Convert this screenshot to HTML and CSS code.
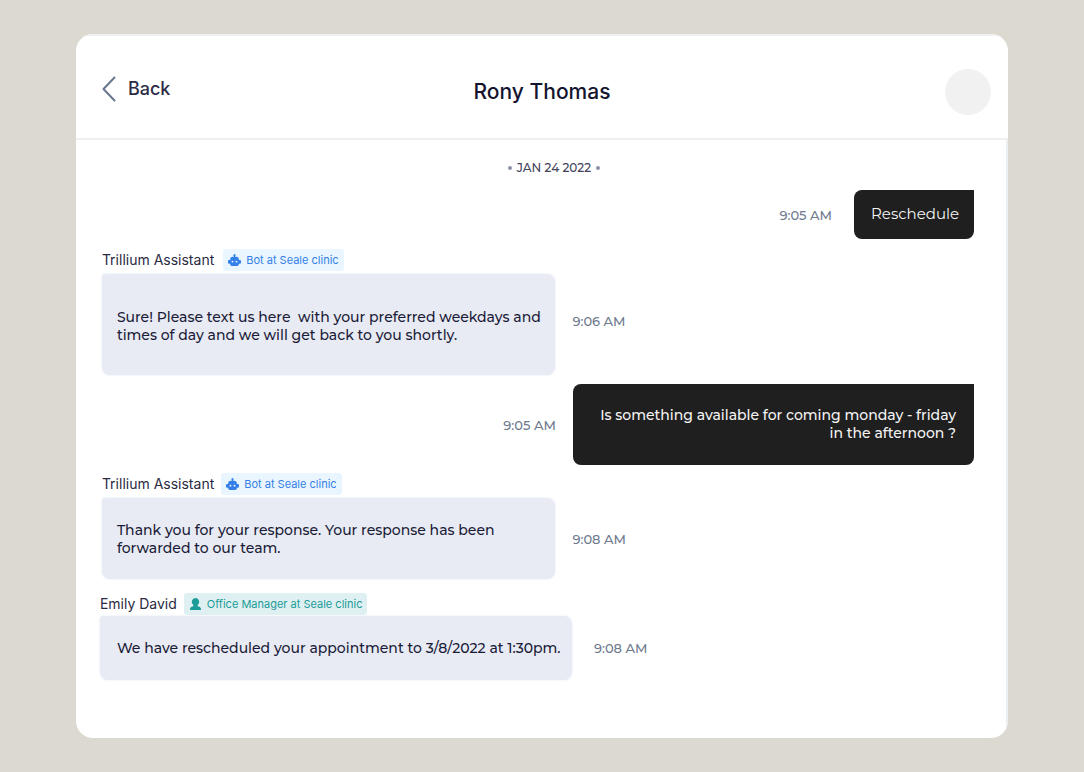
FILE: index.html
```html
<!DOCTYPE html>
<html lang="en">
<head>
<meta charset="utf-8">
<meta name="viewport" content="width=device-width, initial-scale=1">
<title>Rony Thomas</title>
<link rel="stylesheet" href="styles.css">
</head>
<body>
<svg class="defs" aria-hidden="true">
  <symbol id="robot" viewBox="0 0 24 22">
    <path fill="currentColor" fill-rule="evenodd" d="M10.8 5V3.800a2 2 0 1 1 2.400 0V5H15a5 5 0 0 1 5 5v1h2a2 2 0 0 1 2 2v3a2 2 0 0 1-2 2h-2v1a3 3 0 0 1-3 3H7a3 3 0 0 1-3-3v-1H2a2 2 0 0 1-2-2v-3a2 2 0 0 1 2-2h2v-1a5 5 0 0 1 5-5zM8.300 12.200a1.800 1.800 0 1 0 0 3.600a1.800 1.800 0 0 0 0-3.600zM15.700 12.200a1.800 1.800 0 1 0 0 3.600a1.800 1.800 0 0 0 0-3.600z"/>
  </symbol>
  <symbol id="person" viewBox="0 0 20 22">
    <path fill="currentColor" d="M10 0a7 7 0 0 1 4 12.700V15c3 .6 6 2 6 5v2H0v-2c0-3 3-4.400 6-5v-2.300A7 7 0 0 1 10 0z"/>
  </symbol>
</svg>
<main class="card">
  <header class="header">
    <button class="back" type="button">
      <svg class="chevron" viewBox="0 0 14 26" aria-hidden="true"><path d="M12.500 1.500L1.500 13l11 11.500" fill="none" stroke="currentColor" stroke-width="2" stroke-linecap="round" stroke-linejoin="round"/></svg>
      <span>Back</span>
    </button>
    <h1 class="title">Rony Thomas</h1>
    <span class="avatar"></span>
  </header>
  <section class="thread">
    <p class="date"><span class="dot"></span>JAN 24 2022<span class="dot"></span></p>
    <div class="row sent first">
      <time class="time far">9:05 AM</time>
      <p class="bubble dark short">Reschedule</p>
    </div>
    <article class="message">
      <div class="sender roomy"><span class="name">Trillium Assistant</span><span class="badge bot"><svg class="icon" aria-hidden="true"><use href="#robot"/></svg>Bot at Seale clinic</span></div>
      <div class="row">
        <p class="bubble light tall">Sure! Please text us here&nbsp; with your preferred weekdays and<br>times of day and we will get back to you shortly.</p>
        <time class="time raised">9:06 AM</time>
      </div>
    </article>
    <div class="row sent second">
      <time class="time">9:05 AM</time>
      <p class="bubble dark long">Is something available for coming monday - friday<br>in the afternoon ?</p>
    </div>
    <article class="message reply">
      <div class="sender"><span class="name">Trillium Assistant</span><span class="badge bot"><svg class="icon" aria-hidden="true"><use href="#robot"/></svg>Bot at Seale clinic</span></div>
      <div class="row">
        <p class="bubble light">Thank you for your response. Your response has been<br>forwarded to our team.</p>
        <time class="time">9:08 AM</time>
      </div>
    </article>
    <article class="message manager">
      <div class="sender close"><span class="name">Emily David</span><span class="badge office"><svg class="icon" aria-hidden="true"><use href="#person"/></svg>Office Manager at Seale clinic</span></div>
      <div class="row">
        <p class="bubble light single">We have rescheduled your appointment to 3/8/2022 at 1:30pm.</p>
        <time class="time far">9:08 AM</time>
      </div>
    </article>
  </section>
</main>
</body>
</html>
```

FILE: styles.css
```css
* { box-sizing: border-box; }
body {
  margin: 0;
  min-height: 100vh;
  padding: 34px 7%;
  display: flex;
  background: #dcd9d1;
  color: #1b1b38;
  font-family: Montserrat, Inter, sans-serif;
  font-size: 14px;
  font-weight: 500;
  line-height: 18px;
}
p, h1 { margin: 0; }
.defs { position: absolute; width: 0; height: 0; }
.card {
  flex: 1;
  display: flex;
  flex-direction: column;
  background: #fff;
  border-radius: 17px;
  overflow: hidden;
}
.header {
  display: grid;
  grid-template-columns: 1fr auto 1fr;
  align-items: center;
  padding: 33px 17px 23px;
  border-top: 2px solid #f0f0f0;
  border-bottom: 2px solid #f0f0f0;
}
.back {
  justify-self: start;
  display: flex;
  align-items: center;
  gap: 12px;
  padding: 0 0 6px 9px;
  border: 0;
  background: none;
  color: #2b2b45;
  font: 500 18px/24px Inter, sans-serif;
  cursor: pointer;
}
.chevron { width: 14px; height: 26px; color: #68778d; }
.title { font: 500 21px/28px Inter, sans-serif; color: #14142f; }
.avatar { justify-self: end; width: 46px; height: 46px; border-radius: 50%; background: #f1f1f1; }
.thread {
  flex: 1;
  padding: 20px 32px 56px 26px;
  border-right: 2px solid #eaeff4;
}
.date {
  display: flex;
  justify-content: center;
  align-items: center;
  gap: 5px;
  padding-left: 32px;
  color: #45455e;
  font-size: 12px;
  line-height: 16px;
}
.dot { width: 4px; height: 4px; border-radius: 50%; background: #8c93a6; }
.row { display: flex; align-items: center; gap: 17px; }
.sent { justify-content: flex-end; }
.first { margin-top: 14px; }
.second { margin-top: 9px; }
.time { color: #6f7b8f; font-size: 13px; line-height: 16px; white-space: nowrap; }
.raised { padding-bottom: 8px; }
.sent .far { margin-right: 5px; }
.manager .far { margin-left: 5px; }
.bubble { padding: 23px 15px 22px; white-space: nowrap; }
.dark {
  background: #1f1f1f;
  color: #f4f4f4;
  border-radius: 8px 0 8px 8px;
  padding: 22px 18px 23px;
  text-align: right;
}
.short { padding: 15px 15px 16px 17px; font-size: 15px; font-weight: 400; }
.long { width: 46%; }
.light {
  width: 52%;
  background: #e8ebf4;
  border-radius: 3px 8px 8px 8px;
  box-shadow: 0 0 3px #e8ebf4;
}
.tall { padding: 34px 15px 31px; }
.single { width: 54%; padding: 23px 12px 23px 17px; }
.message { margin-top: 10px; }
.reply { margin-top: 8px; }
.manager { margin: 14px 0 0 -2px; }
.sender { display: flex; align-items: center; gap: 7px; margin-bottom: 3px; }
.roomy { gap: 9px; }
.close { margin-bottom: 1px; }
.name { color: #2a2a42; font: 400 14px/22px Inter, sans-serif; }
.badge {
  display: flex;
  align-items: center;
  gap: 5px;
  padding: 0 5px;
  border-radius: 3px;
  font: 400 11px/22px Inter, sans-serif;
}
.bot { background: #e9f6ff; color: #347fe8; }
.office { background: #dff0f2; color: #1c9c98; }
.icon { width: 13px; height: 12px; }
```
